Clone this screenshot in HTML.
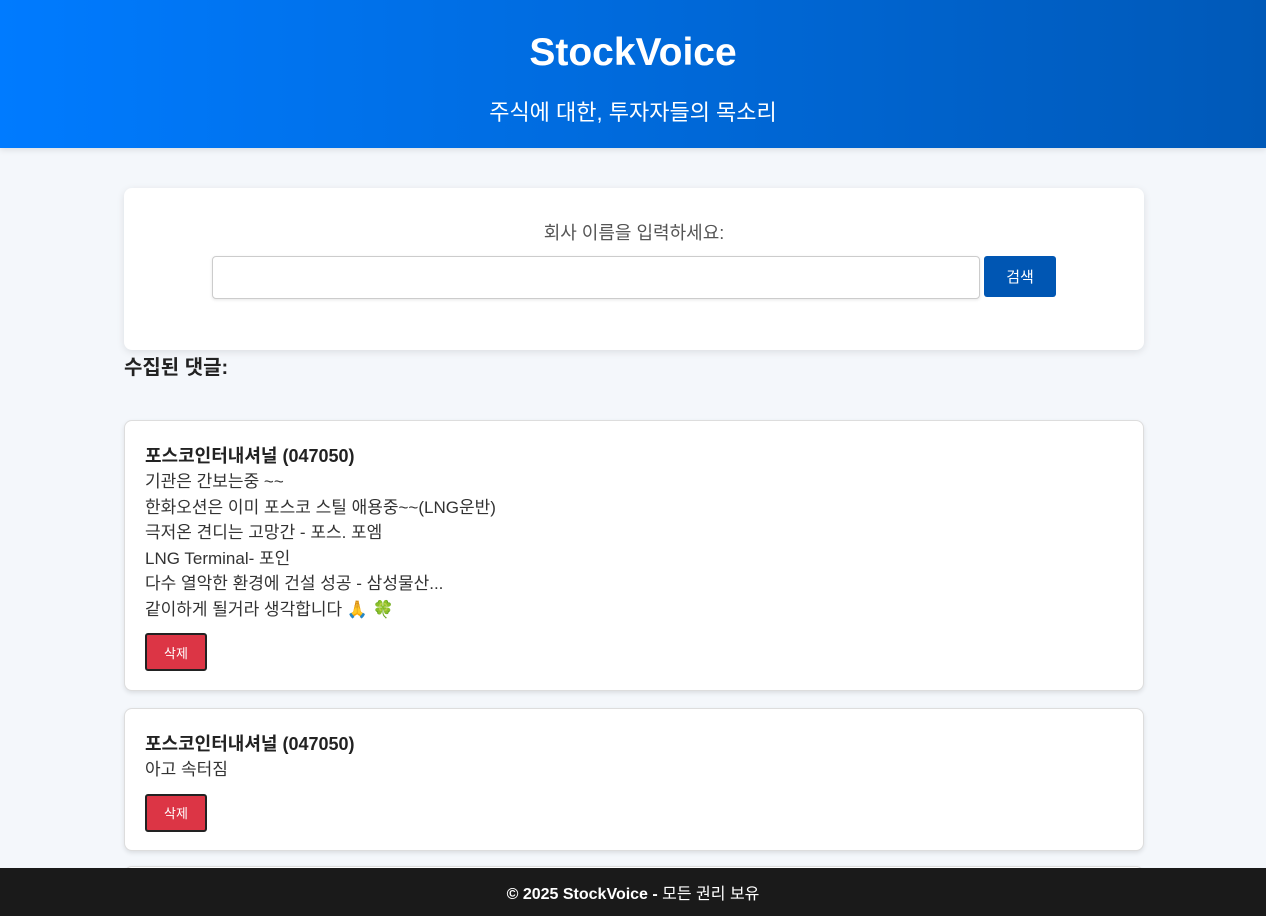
<!DOCTYPE html>
<html><head><meta charset="utf-8"><style>
*{box-sizing:border-box;margin:0;padding:0}
html{overflow:hidden;height:916px}
body{width:1266px;height:916px;overflow:hidden;background:#f4f7fb;font-family:"Liberation Sans","Noto Sans CJK KR",sans-serif;color:#333;position:relative}
header{height:148px;background:linear-gradient(90deg,#007bff,#0059b8);color:#fff;text-align:center;box-shadow:0 2px 6px rgba(0,0,0,.1)}
header h1{font-size:39px;font-weight:bold;padding-top:31px;line-height:44px}
header p{font-size:22px;margin-top:20px}
.search{position:absolute;left:124px;top:188px;width:1020px;height:162px;background:#fff;border-radius:8px;box-shadow:0 2px 8px rgba(0,0,0,.1);text-align:center}
.search label{display:block;font-size:18px;color:#555;margin-top:31px}
.search input{position:absolute;left:88px;top:68px;width:768px;height:43px;border:1px solid #ccc;border-radius:4px;box-shadow:0 1px 3px rgba(0,0,0,.1)}
.search button{position:absolute;left:860px;top:68px;width:72px;height:41px;background:#0056b3;color:#fff;border:0;border-radius:3px;font-size:15px;font-family:inherit}
h2{position:absolute;left:124px;top:351px;font-size:20px;font-weight:bold;color:#222}
.card{position:absolute;left:124px;width:1020px;background:#fff;border:1px solid #ddd;border-radius:8px;box-shadow:0 2px 5px rgba(0,0,0,.1);padding:20px 20px 0}
.card h3{font-size:18px;font-weight:bold;color:#222;line-height:26px;margin-top:2px}
.card p{font-size:17px;line-height:25.5px;color:#333}
.del{margin-top:11px;width:62px;height:38px;background:#dc3545;color:#fff;border:2px solid #222;border-radius:3px;font-size:13px;font-family:inherit}
footer{position:absolute;left:0;top:868px;width:1266px;height:48px;background:#1a1a1a;color:#fff;text-align:center;font-size:16px;font-weight:bold;line-height:54px}
</style></head><body>
<header><h1>StockVoice</h1><p>주식에 대한, 투자자들의 목소리</p></header>
<div class="search"><label>회사 이름을 입력하세요:</label><input><button>검색</button></div>
<h2>수집된 댓글:</h2>
<div class="card" style="top:420px;height:271px"><h3>포스코인터내셔널 (047050)</h3><p>기관은 간보는중 ~~<br>한화오션은 이미 포스코 스틸 애용중~~(LNG운반)<br>극저온 견디는 고망간 - 포스. 포엠<br>LNG Terminal- 포인<br>다수 열악한 환경에 건설 성공 - 삼성물산...<br>같이하게 될거라 생각합니다 🙏 🍀</p><button class="del">삭제</button></div>
<div class="card" style="top:708px;height:143px"><h3>포스코인터내셔널 (047050)</h3><p>아고 속터짐</p><button class="del">삭제</button></div>
<div class="card" style="top:866px;height:50px"></div>
<footer>© 2025 StockVoice - <span style="font-weight:normal">모든 권리 보유</span></footer>
</body></html>
